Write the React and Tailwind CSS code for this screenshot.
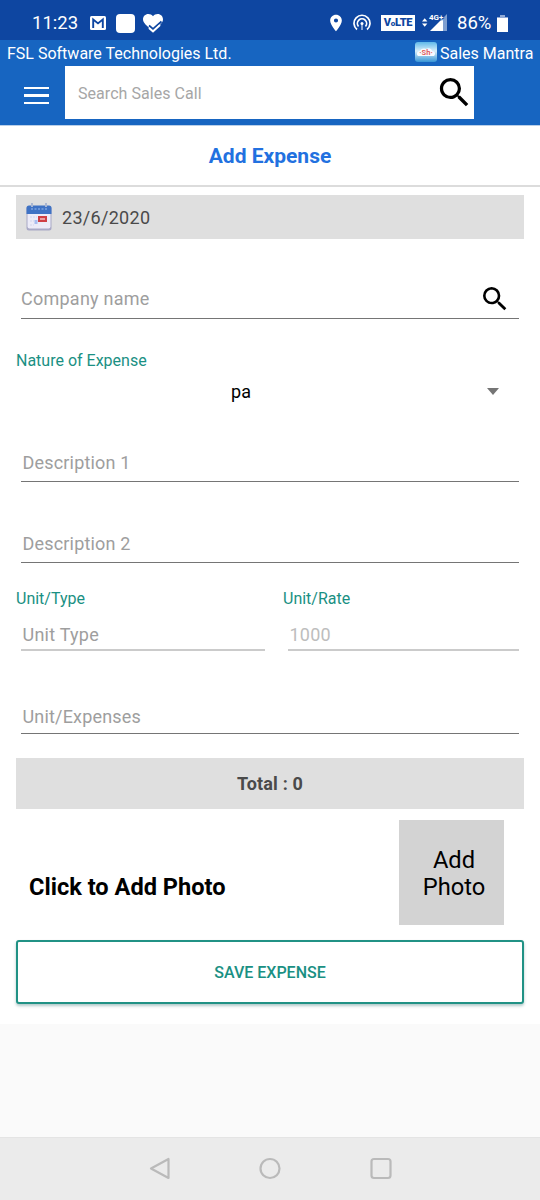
import React from 'react';
import { MdSearch, MdLocationOn } from 'react-icons/md';

const StatusBar = () => (
  <div className="h-10 bg-[#0e46a1] text-white flex items-center justify-between pl-8 pr-[32px] pt-[6px]">
    <div className="flex items-center">
      <span className="w-[46px] text-[18.5px] leading-none whitespace-nowrap">11:23</span>
      <svg className="ml-3 w-4 h-[14px]" viewBox="0 0 16 14">
        <rect width="16" height="14" rx="1.5" fill="#fff" />
        <path d="M3.2 12V3.5L8 7.4l4.8-3.9V12" fill="none" stroke="#0e46a1" strokeWidth="1.9" />
      </svg>
      <span className="ml-[10px] w-[19px] h-[19px] rounded-[4px] bg-white" />
      <svg className="ml-2 w-5 h-[19px]" viewBox="0 0 20 19">
        <path d="M10 17C4 12 0 9 0 5.200 0 2.300 2.300 0 5.300 0 7.200 0 8.900.9 10 2.300 11.100.9 12.800 0 14.700 0 17.700 0 20 2.300 20 5.200 20 9 16 12 10 17Z" fill="#fff" />
        <path d="M6 11.500 10 15 18.500 7.500" fill="none" stroke="#0e46a1" strokeWidth="1.800" />
        <path d="M6 14 10 17.500 17 11" fill="none" stroke="#fff" strokeWidth="2" />
      </svg>
    </div>

    <div className="flex items-center">
      <MdLocationOn size={20} />
      <svg className="ml-[7px] w-[18px] h-[18px]" viewBox="0 0 18 18" fill="none" stroke="#fff" strokeWidth="1.700">
        <path d="M4 15.500A8 8 0 1 1 14 15.500" />
        <path d="M5.500 12.500A4.600 4.600 0 1 1 12.500 12.500" />
        <circle cx="9" cy="9.500" r="1.500" fill="#fff" stroke="none" />
        <path d="M9 10V16" strokeWidth="1" />
      </svg>
      <span className="ml-[10px] w-[34px] h-4 bg-white text-[#0e46a1] text-[11px] font-black leading-4 text-center tracking-tight">
        V<span className="text-[8px]">o</span>LTE
      </span>
      <svg className="ml-[6px] w-[28px] h-5" viewBox="0 0 28 20">
        <path d="M1 8.500 3.700 5.300 6.400 8.500ZM1 10.500 3.700 13.700 6.400 10.500Z" fill="#fff" />
        <path d="M9 18 22 5V18Z" fill="#fff" />
        <path d="M22 5 26 1V18H22Z" fill="#7f9fd0" />
        <text x="8" y="7" fontSize="8" fontWeight="700" fill="#fff" stroke="#0e46a1" strokeWidth="1.500" paintOrder="stroke" fontFamily="Roboto, sans-serif">4G+</text>
      </svg>
      <span className="ml-[8px] w-[35px] text-[18.5px] leading-none whitespace-nowrap">86%</span>
      <svg className="ml-[5px] w-[11px] h-[17px]" viewBox="0 0 11 17">
        <path d="M3 0H8V2H11V17H0V2H3Z" fill="#fff" />
        <path d="M3 0H8V2H11V3H0V2H3Z" fill="#8fa9d6" />
      </svg>
    </div>
  </div>
);

const Header = () => (
  <header className="h-[86px] bg-[#1765c1] border-b border-[#b9cfe9] text-white">
    <div className="h-[26px] pl-[7px] pr-[6px] flex items-center justify-between text-[16px] leading-none">
      <span className="pt-[2px]">FSL Software Technologies Ltd.</span>
      <div className="flex items-center">
        <svg className="w-[22px] h-5 -mt-[2px]" viewBox="0 0 22 20">
          <defs>
            <linearGradient id="sky" x1="0" y1="0" x2="0" y2="1">
              <stop offset="0" stopColor="#60b9e9" />
              <stop offset="0.45" stopColor="#d9effa" />
              <stop offset="1" stopColor="#3795d6" />
            </linearGradient>
          </defs>
          <rect width="22" height="20" rx="3" fill="url(#sky)" />
          <path d="M3 14C1 12 2 9 5 9 6 6 10 6 11 7 14 5 17 7 17 9 20 9 21 12 19 14Z" fill="#f7fbff" />
          <text x="11" y="13" fontSize="7.500" fontWeight="700" textAnchor="middle" fill="#e2605f" fontFamily="Roboto, sans-serif">·Sh·</text>
        </svg>
        <span className="ml-[3px] pt-[2px] w-[94px] whitespace-nowrap">Sales Mantra</span>
      </div>
    </div>
    <div className="flex items-center">
      <button className="ml-6 mt-[6px] w-[25px] flex flex-col gap-[5px]">
        <span className="h-[2.5px] bg-white" />
        <span className="h-[2.5px] bg-white" />
        <span className="h-[2.5px] bg-white" />
      </button>
      <div className="ml-4 w-[409px] h-[53px] bg-white flex items-center justify-between pl-[13px]">
        <span className="pt-[2px] text-[16px] tracking-[0.05px] text-[#a6a6a6]">Search Sales Call</span>
        <MdSearch size={39} className="text-black" />
      </div>
    </div>
  </header>
);

const CalendarIcon = () => (
  <svg className="w-[26px] h-7" viewBox="0 0 26 28">
    <rect x="0.500" y="3" width="25" height="24.500" rx="2.500" fill="#a9a9c6" />
    <rect x="1.500" y="4" width="23" height="21.500" rx="2" fill="#ecebf8" />
    <path d="M.5 11V5A2.500 2.500 0 0 1 3 2.500H23A2.500 2.500 0 0 1 25.500 5V11Z" fill="#3f72c4" />
    <path d="M6 0V4M20 0V4" stroke="#a9b6d2" strokeWidth="2" />
    <path d="M5 6H21" stroke="#7ba2de" strokeWidth="1.500" strokeDasharray="2 1.500" />
    <path d="M4 14H11M4 18H8M4 22H8" stroke="#dfe0f3" strokeWidth="2" strokeDasharray="2 1" />
    <rect x="8.500" y="17" width="3" height="4" fill="#a8bdf0" />
    <rect x="12" y="13" width="9" height="6" fill="#cf3e44" />
    <path d="M14 16H19" stroke="#f3c0c2" strokeWidth="1.500" />
  </svg>
);

const Field = ({ placeholder, className = '' }) => (
  <div className={`mx-[5px] pl-[1.5px] flex items-end border-b border-[#757575] text-[18px] leading-[21px] tracking-[0.18px] text-[#9e9e9e] ${className}`}>
    {placeholder}
  </div>
);

const UnitField = ({ label, value, className = '', valueClass = '' }) => (
  <div className={className}>
    <div className="text-[16px] leading-5 text-[#1a9083]">{label}</div>
    <div className={`ml-[5px] mt-[15px] h-[27px] pl-[1.5px] border-b-2 border-[#cbcbcb] text-[18px] leading-[22px] tracking-[0.25px] ${valueClass}`}>
      {value}
    </div>
  </div>
);

const ExpenseForm = () => (
  <main className="h-[837px] px-4 pt-2">
    <div className="h-11 bg-[#dfdfdf] flex items-center pl-[10px]">
      <CalendarIcon />
      <span className="ml-[10px] pt-px text-[18px] tracking-[0.3px] text-[#4a4a4a]">23/6/2020</span>
    </div>

    <div className="mx-[5px] mt-[40px] h-[40px] pr-2 flex items-center justify-between border-b border-[#757575]">
      <span className="text-[18px] tracking-[0.25px] text-[#9e9e9e]">Company name</span>
      <MdSearch size={32} className="text-black" />
    </div>

    <div className="mt-[32px] text-[16px] leading-5 text-[#1a9083]">Nature of Expense</div>
    <div className="mt-[6px] h-7 flex items-center pl-[215px] pr-[25px] justify-between">
      <span className="text-[18px] tracking-[0.2px] text-black">pa</span>
      <svg className="w-3 h-[7px]" viewBox="0 0 12 7">
        <path d="M0 0H12L6 7Z" fill="#757575" />
      </svg>
    </div>

    <Field placeholder="Description 1" className="h-[77px] pb-[8px]" />
    <Field placeholder="Description 2" className="h-[81px] pb-[8px]" />

    <div className="mt-[26px] flex">
      <UnitField label="Unit/Type" value="Unit Type" className="w-[249px]" valueClass="text-[#9e9e9e]" />
      <UnitField label="Unit/Rate" value="1000" className="ml-[18px] w-[236px]" valueClass="text-[#bdbdbd]" />
    </div>

    <Field placeholder="Unit/Expenses" className="h-[83px] pb-[6px]" />

    <div className="mt-6 h-[51px] bg-[#dfdfdf] flex items-center justify-center text-[18px] tracking-[0.15px] font-bold text-[#4a4a4a]">
      Total : 0
    </div>

    <div className="mt-[11px] flex items-start justify-between pl-[13px] pr-5">
      <span className="mt-[53px] text-[23.6px] leading-7 font-bold text-black">Click to Add Photo</span>
      <button className="w-[105px] h-[105px] bg-[#d3d3d3] pl-[5px] pt-[3px] text-[23.7px] leading-[27.5px] text-black text-center">
        Add<br />Photo
      </button>
    </div>

    <button className="mt-[15px] w-full h-16 pt-px rounded-[3px] border-2 border-[#219285] bg-white text-[16px] font-medium text-[#1a9083] shadow-[0_2px_3px_rgba(0,80,80,0.3)]">
      SAVE EXPENSE
    </button>
  </main>
);

const NavBar = () => (
  <nav className="h-[63px] bg-[#ebebeb] border-t border-[#e4e4e4]">
    <svg className="w-full h-full" viewBox="0 0 540 62" fill="none" stroke="#bababa" strokeWidth="2.200" strokeLinejoin="round">
      <path d="M151 30.500 168.500 21V40Z" />
      <circle cx="270" cy="30.500" r="9.500" />
      <rect x="371.500" y="21" width="19" height="19" rx="2.500" />
    </svg>
  </nav>
);

const App = () => (
  <div className="w-[540px] h-[1200px] bg-[#fafafa] overflow-hidden flex flex-col justify-between font-[Roboto,sans-serif]">
    <div className="bg-white">
      <StatusBar />
      <Header />
      <h1 className="h-[61px] pt-[3px] border-b-2 border-[#dcdcdc] flex items-center justify-center text-[21px] font-bold text-[#2271e0]">
        Add Expense
      </h1>
      <ExpenseForm />
    </div>
    <NavBar />
  </div>
);

export default App;
